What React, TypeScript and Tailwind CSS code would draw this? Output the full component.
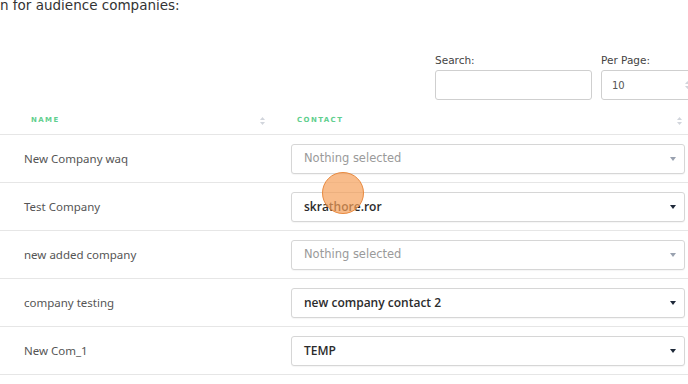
import { ReactNode } from "react";

const rows = [
  { name: "New Company waq", contact: "" },
  { name: "Test Company", contact: "skrathore.ror" },
  { name: "new added company", contact: "" },
  { name: "company testing", contact: "new company contact 2" },
  { name: "New Com_1", contact: "TEMP" },
  { name: "", contact: "" },
];

const SortIcon = () => (
  <svg width="5" height="8" viewBox="0 0 5 8" className="text-gray-300">
    <path d="M2.5 0L5 3H0z" fill="currentColor" />
    <path d="M2.5 8L0 5h5z" fill="currentColor" />
  </svg>
);

const Caret = ({ faded }: { faded?: boolean }) => (
  <svg width="6" height="4" viewBox="0 0 6 4" className={faded ? "text-gray-400" : "text-gray-800"}>
    <path d="M0 0h6L3 4z" fill="currentColor" />
  </svg>
);

const ContactSelect = ({ value }: { value: string }) => (
  <div className="w-[394px] h-[30px] border border-[#d6d6d6] rounded-[3px] bg-white flex items-center justify-between pl-[12px] pr-[8px] shadow-[0_1px_1px_rgba(0,0,0,0.04)]">
    {value ? (
      <span className="text-[12px] font-semibold text-[#2b2b2b] font-['Open_Sans',sans-serif]">{value}</span>
    ) : (
      <span className="text-[11.5px] text-[#9a9a9a]">Nothing selected</span>
    )}
    <Caret faded={!value} />
  </div>
);

const Field = ({ label, children }: { label: string; children: ReactNode }) => (
  <div className="flex flex-col gap-[4px]">
    <label className="text-[10.5px] leading-[12px] text-[#444]">{label}</label>
    {children}
  </div>
);

export default function App() {
  return (
    <div
      className="relative w-[688px] h-[384px] overflow-hidden bg-white text-[#555]"
      style={{ fontFamily: '"DejaVu Sans", "Noto Sans", sans-serif' }}
    >
      <div className="-mt-[5px] h-[24px]">
        <p className="text-[13.5px] leading-[20px] text-[#333]">n for audience companies:</p>
      </div>

      <div className="mt-[35px] flex justify-end gap-[9px] -mr-[20px]">
        <Field label="Search:">
          <input className="w-[157px] h-[30px] border border-[#cfcfcf] rounded-[3px] outline-none" />
        </Field>
        <Field label="Per Page:">
          <div className="w-[107px] h-[30px] border border-[#cfcfcf] rounded-[3px] flex items-center justify-between pl-[10px] pr-[17px]">
            <span className="text-[10px] text-[#555]">10</span>
            <SortIcon />
          </div>
        </Field>
      </div>

      <div className="mt-[7px]">
        <div className="flex h-[28px] items-center border-b border-[#e6e6e6]">
          <div className="w-[280px] flex items-center justify-between pl-[31px] pr-[15px]">
            <span className="text-[7px] font-bold tracking-[0.2em] text-[#5fcf8e]">NAME</span>
            <SortIcon />
          </div>
          <div className="flex-1 flex items-center justify-between pl-[17px] pr-[6px]">
            <span className="text-[7px] font-bold tracking-[0.2em] text-[#5fcf8e]">CONTACT</span>
            <SortIcon />
          </div>
        </div>
        {rows.map((r, i) => (
          <div key={i} className="flex h-[48px] items-center border-b border-[#e6e6e6]">
            <div className="w-[280px] pl-[24px] text-[11.5px] text-[#555] font-['Noto_Sans',sans-serif]">
              {r.name}
            </div>
            <div className="flex-1 pl-[11px]">
              <ContactSelect value={r.contact} />
            </div>
          </div>
        ))}
      </div>

      <div className="absolute left-[322px] top-[172px] w-[42px] h-[42px] rounded-full bg-[#f5a05a]/70 border border-[#e98a3f]" />
    </div>
  );
}
